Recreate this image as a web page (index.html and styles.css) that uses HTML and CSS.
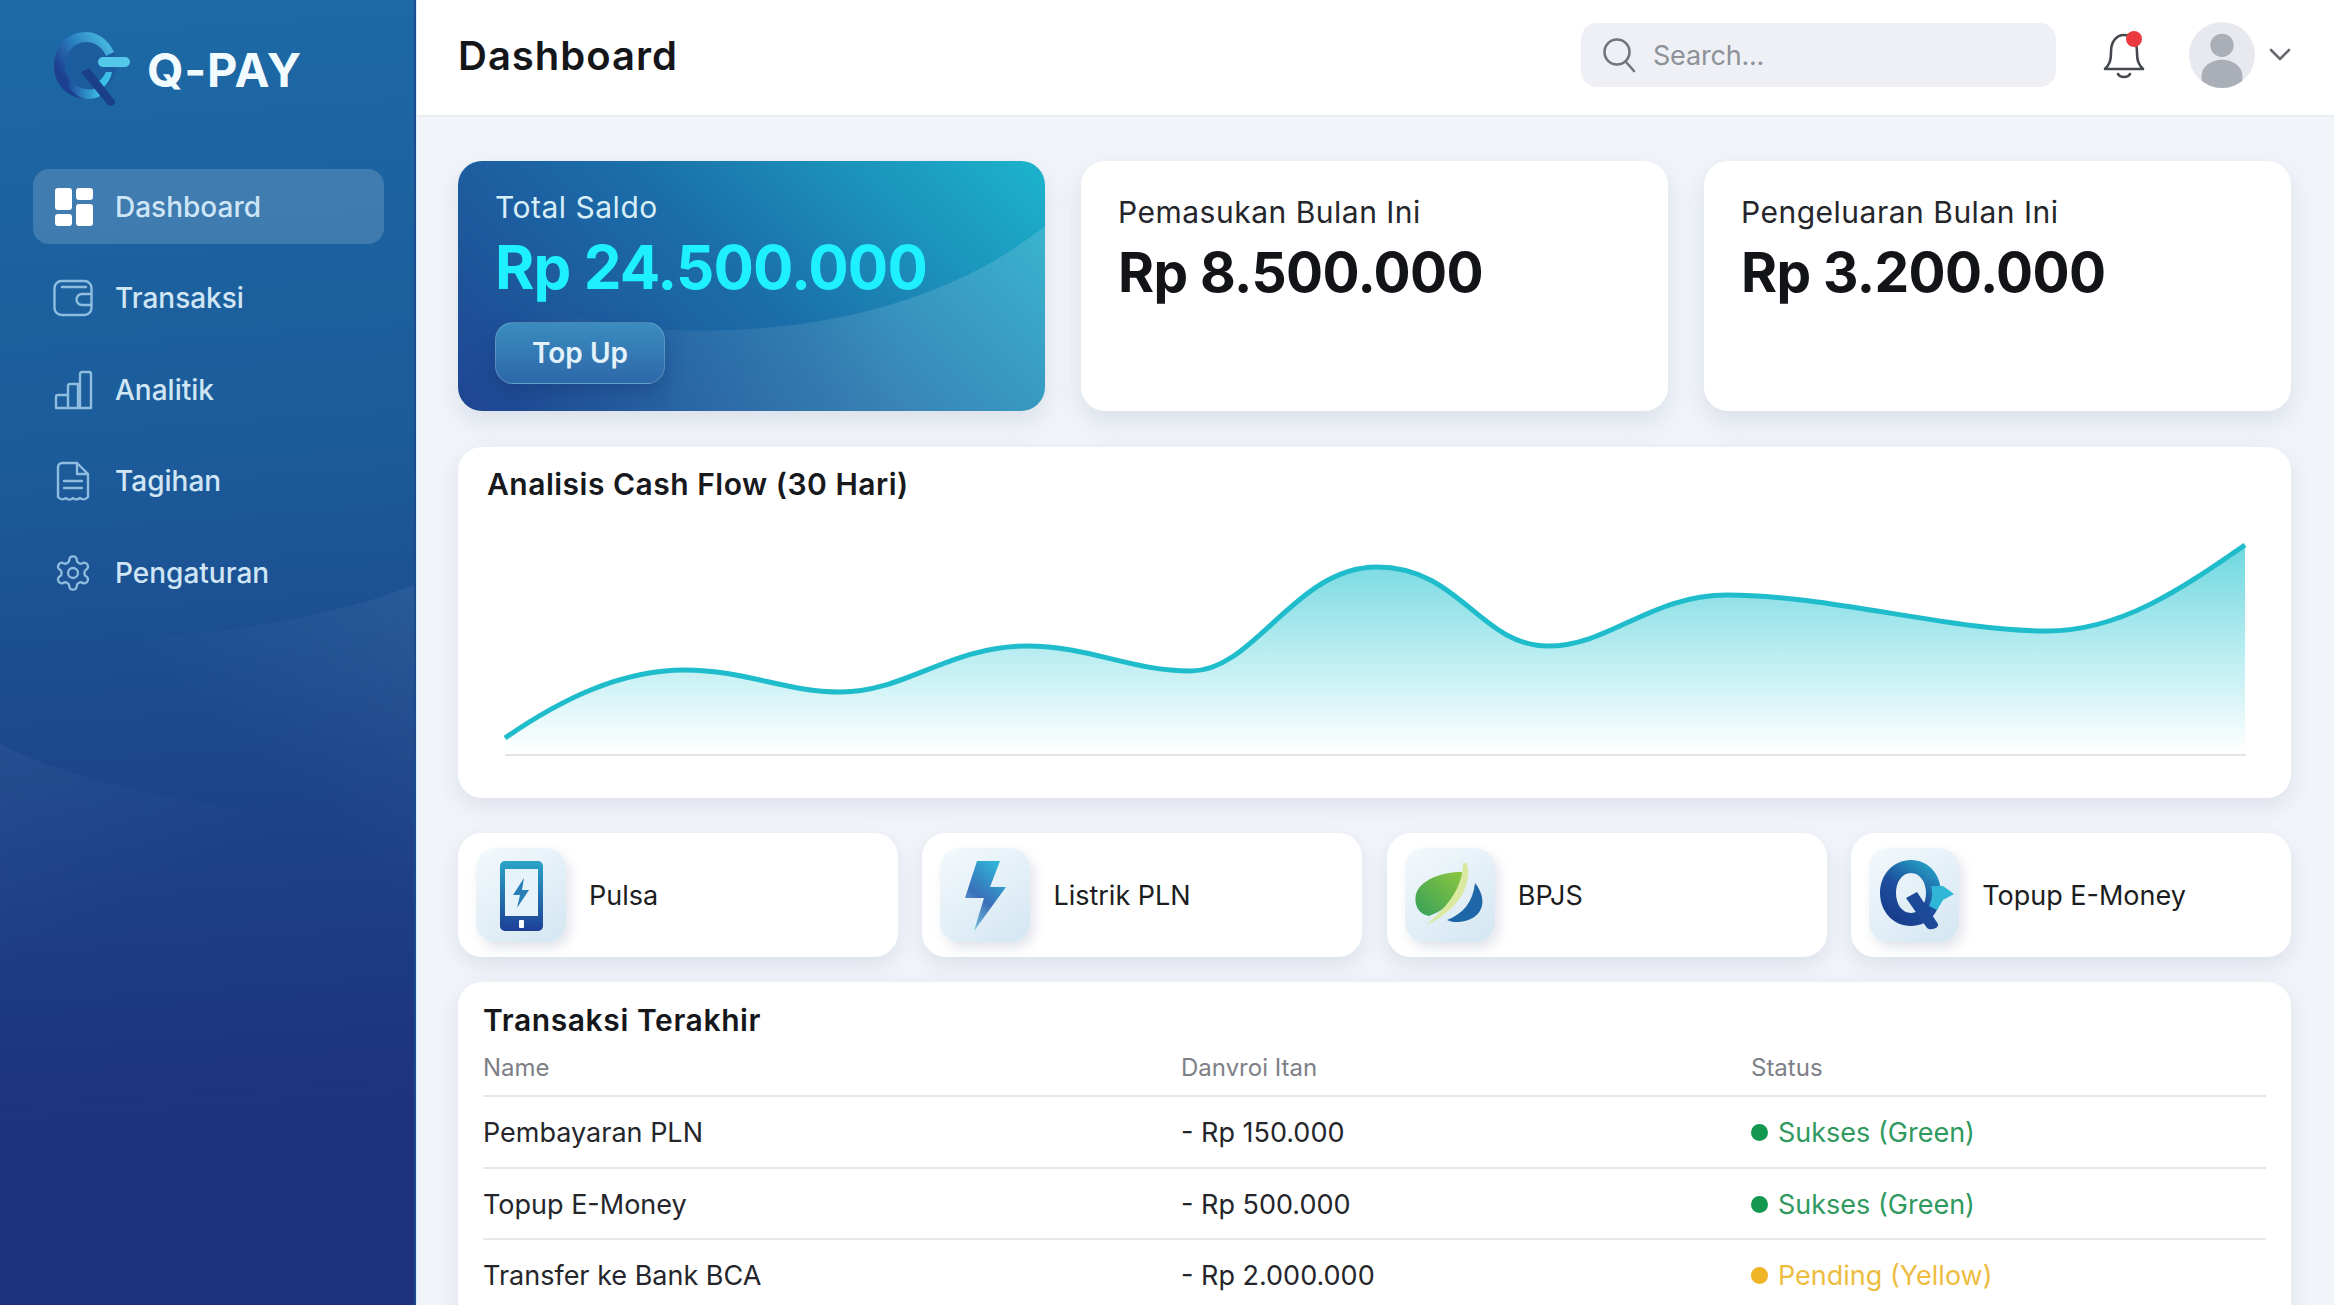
FILE: index.html
```html
<!DOCTYPE html>
<html lang="id">
<head>
<meta charset="utf-8">
<title>Q-PAY Dashboard</title>
<link rel="stylesheet" href="styles.css">
</head>
<body>
<div class="app">
  <aside class="sidebar">
    <svg class="waves" viewBox="0 0 416 1305" preserveAspectRatio="none" aria-hidden="true">
      <defs>
        <linearGradient id="waveA" gradientUnits="userSpaceOnUse" x1="416" y1="590" x2="250" y2="760"><stop offset="0" stop-color="#fff" stop-opacity=".055"/><stop offset="1" stop-color="#fff" stop-opacity="0"/></linearGradient>
        <linearGradient id="waveB" gradientUnits="userSpaceOnUse" x1="20" y1="750" x2="110" y2="920"><stop offset="0" stop-color="#fff" stop-opacity=".035"/><stop offset="1" stop-color="#fff" stop-opacity="0"/></linearGradient>
      </defs>
      <path d="M416 585C340 615 240 632 130 640C90 642 40 643 0 643V1000H416Z" fill="url(#waveA)"/>
      <path d="M0 744C70 780 170 800 270 812C320 818 370 822 416 824V1100H0Z" fill="url(#waveB)"/>
    </svg>
    <div class="brand">
      <svg class="brand-mark" viewBox="0 0 84 80" aria-hidden="true">
        <defs>
          <linearGradient id="qRing" x1="0.9" y1="0" x2="0.1" y2="0.6"><stop offset="0" stop-color="#4fc3e6"/><stop offset=".55" stop-color="#2a7fc0"/><stop offset="1" stop-color="#1d3f8f"/></linearGradient>
          <linearGradient id="qLow" x1="0" y1="0" x2="1" y2="0"><stop offset="0" stop-color="#1d4a9a"/><stop offset="1" stop-color="#3cc0e8"/></linearGradient>
        </defs>
        <circle cx="38" cy="37" r="29" fill="#1b4f97" opacity=".45"/>
        <path d="M64 24C58 11 47 4 36 4C17 4 4 19 4 38C4 56 17 70 36 71C42 71 46 70 50 68L47 60C43 61 40 62 36 61C24 60 15 50 15 38C15 25 24 14 36 14C45 14 52 19 56 28Z" fill="url(#qRing)"/>
        <path d="M18 58C24 66 30 71 38 71C43 71 47 70 50 68L47 60C40 63 30 62 18 52Z" fill="url(#qLow)"/>
        <path d="M56 44H62C61 50 58 55 54 59L49 53C52 51 54 48 56 44Z" fill="#3cc0e8"/>
        <path d="M31 44L39 40L65 73C66 76 60 80 57 76Z" fill="#1b3f8b"/>
        <rect x="48" y="29" width="32" height="10" rx="5" fill="#55c8ea"/>
      </svg>
      <span class="brand-name">Q-PAY</span>
    </div>
    <nav class="nav">
      <a class="nav-item is-active">
        <svg class="nav-icon" viewBox="0 0 40 40" aria-hidden="true"><g fill="#fff"><rect x="2" y="1" width="17" height="22" rx="3"/><rect x="23" y="1" width="17" height="12" rx="3"/><rect x="23" y="17" width="17" height="22" rx="3"/><rect x="2" y="27" width="17" height="12" rx="3"/></g></svg>
        <span>Dashboard</span>
      </a>
      <a class="nav-item">
        <svg class="nav-icon line" viewBox="0 0 40 40" aria-hidden="true"><rect x="1.5" y="3" width="37" height="34" rx="7"/><path d="M9 9H33M38 16H29a5 5 0 0 0 0 11H38"/></svg>
        <span>Transaksi</span>
      </a>
      <a class="nav-item">
        <svg class="nav-icon line" viewBox="0 0 40 40" aria-hidden="true"><path d="M3 38V27a2 2 0 0 1 2-2H15V38ZM15 38V16a2 2 0 0 1 2-2H25V38ZM27 38V4a2 2 0 0 1 2-2H36a2 2 0 0 1 2 2V38ZM3 38H38"/></svg>
        <span>Analitik</span>
      </a>
      <a class="nav-item">
        <svg class="nav-icon line" viewBox="0 0 40 40" aria-hidden="true"><path d="M5 36V6a4 4 0 0 1 4-4H24L35 13V36C32 39 30 39 27 37C24 39 22 39 20 37C18 39 15 39 13 37C10 39 8 39 5 36ZM24 2V13H35M11 20H29M11 27H29"/></svg>
        <span>Tagihan</span>
      </a>
      <a class="nav-item">
        <svg class="nav-icon line gear" viewBox="0 0 24 24" aria-hidden="true"><circle cx="12" cy="12" r="3"/><path d="M12.22 2h-.44a2 2 0 0 0-2 2v.18a2 2 0 0 1-1 1.73l-.43.25a2 2 0 0 1-2 0l-.15-.08a2 2 0 0 0-2.73.73l-.22.38a2 2 0 0 0 .73 2.73l.15.1a2 2 0 0 1 1 1.72v.51a2 2 0 0 1-1 1.74l-.15.09a2 2 0 0 0-.73 2.73l.22.38a2 2 0 0 0 2.73.73l.15-.08a2 2 0 0 1 2 0l.43.25a2 2 0 0 1 1 1.73V20a2 2 0 0 0 2 2h.44a2 2 0 0 0 2-2v-.18a2 2 0 0 1 1-1.73l.43-.25a2 2 0 0 1 2 0l.15.08a2 2 0 0 0 2.73-.73l.22-.39a2 2 0 0 0-.73-2.73l-.15-.08a2 2 0 0 1-1-1.74v-.5a2 2 0 0 1 1-1.74l.15-.09a2 2 0 0 0 .73-2.73l-.22-.38a2 2 0 0 0-2.73-.73l-.15.08a2 2 0 0 1-2 0l-.43-.25a2 2 0 0 1-1-1.73V4a2 2 0 0 0-2-2z"/></svg>
        <span>Pengaturan</span>
      </a>
    </nav>
  </aside>

  <div class="content">
    <header class="topbar">
      <h1 class="page-title">Dashboard</h1>
      <div class="topbar-right">
        <div class="search">
          <svg class="search-icon" viewBox="0 0 34 36" aria-hidden="true"><circle cx="15" cy="15" r="12.5"/><path d="M24 25L32 34"/></svg>
          <span class="search-text">Search...</span>
        </div>
        <div class="bell">
          <svg viewBox="0 0 42 50" aria-hidden="true"><path class="bell-line" d="M2 39C7 34 8 30 8 22C8 12 13 5 21 5C29 5 34 12 34 22C34 30 35 34 40 39ZM15 44C17 48 25 48 27 44"/><circle cx="31" cy="9" r="8" fill="#ea3a3f"/></svg>
        </div>
        <div class="avatar">
          <svg viewBox="0 0 66 68" aria-hidden="true"><circle cx="33" cy="24" r="12" fill="#aaaeb6"/><path d="M12 64V56C12 46 22 39 33 39C44 39 54 46 54 56V64C46 70 20 70 12 64Z" fill="#aaaeb6"/></svg>
        </div>
        <svg class="chevron" viewBox="0 0 22 14" aria-hidden="true"><path d="M2 2L11 11L20 2"/></svg>
      </div>
    </header>

    <main class="main">
      <section class="stats">
        <article class="stat stat-balance">
          <svg class="balance-wave" viewBox="0 0 587 250" preserveAspectRatio="none" aria-hidden="true">
            <defs><linearGradient id="balWave" x1="0" y1="0" x2="1" y2="0"><stop offset=".1" stop-color="#fff" stop-opacity="0"/><stop offset=".75" stop-color="#fff" stop-opacity=".13"/></linearGradient></defs>
            <path d="M587 65C500 135 370 175 214 169C170 167 120 160 80 140L0 250H587Z" fill="url(#balWave)"/>
          </svg>
          <div class="stat-inner">
            <p class="balance-label">Total Saldo</p>
            <p class="balance-value">Rp 24.500.000</p>
            <button class="topup">Top Up</button>
          </div>
        </article>
        <article class="stat">
          <p class="stat-label">Pemasukan Bulan Ini</p>
          <p class="stat-value">Rp 8.500.000</p>
        </article>
        <article class="stat">
          <p class="stat-label">Pengeluaran Bulan Ini</p>
          <p class="stat-value">Rp 3.200.000</p>
        </article>
      </section>

      <section class="card chart-card">
        <h2 class="chart-title">Analisis Cash Flow (30 Hari)</h2>
        <svg class="chart" viewBox="487 520 1774 250" aria-hidden="true">
          <defs>
            <linearGradient id="area" x1="0" y1="0" x2="0" y2="1"><stop offset="0" stop-color="#6ed7df"/><stop offset=".55" stop-color="#bdeef2"/><stop offset="1" stop-color="#fff"/></linearGradient>
          </defs>
          <path d="M505 738C560 700 620 670 685 670C745 670 785 692 841 692C905 692 950 646 1027 646C1090 646 1130 671 1191 671C1255 671 1295 567 1377 567C1460 567 1480 646 1548 646C1610 646 1650 595 1727 595C1830 595 1950 631 2047 631C2120 631 2180 590 2245 545V752H505Z" fill="url(#area)"/>
          <path d="M505 755H2246" stroke="#e2e4e8" stroke-width="2" fill="none"/>
          <path d="M505 738C560 700 620 670 685 670C745 670 785 692 841 692C905 692 950 646 1027 646C1090 646 1130 671 1191 671C1255 671 1295 567 1377 567C1460 567 1480 646 1548 646C1610 646 1650 595 1727 595C1830 595 1950 631 2047 631C2120 631 2180 590 2245 545" stroke="#1fbccb" stroke-width="5" fill="none"/>
        </svg>
      </section>

      <section class="shortcuts">
        <a class="shortcut">
          <span class="tile">
            <svg viewBox="0 0 90 94" aria-hidden="true">
              <defs><linearGradient id="phone" x1="0" y1="0" x2="0" y2="1"><stop offset="0" stop-color="#2aa4c8"/><stop offset="1" stop-color="#1d3f96"/></linearGradient></defs>
              <rect x="24" y="13" width="43" height="70" rx="5" fill="url(#phone)"/>
              <rect x="29" y="21" width="33" height="47" fill="#e6f3fa"/>
              <rect x="43" y="72" width="5" height="8" rx="1" fill="#fff"/>
              <path d="M48 30L37 47H44L41 60L53 42H46Z" fill="#2a7fb8"/>
            </svg>
          </span>
          <span class="shortcut-label">Pulsa</span>
        </a>
        <a class="shortcut">
          <span class="tile">
            <svg viewBox="0 0 90 94" aria-hidden="true">
              <defs><linearGradient id="bolt" x1="0.7" y1="0" x2="0.2" y2="1"><stop offset="0" stop-color="#2fb4d8"/><stop offset=".55" stop-color="#3a6fb8"/><stop offset="1" stop-color="#7cc6de"/></linearGradient></defs>
              <path d="M37 13H60L50 39H66L34 83L44 50H25Z" fill="url(#bolt)"/>
            </svg>
          </span>
          <span class="shortcut-label">Listrik PLN</span>
        </a>
        <a class="shortcut">
          <span class="tile">
            <svg viewBox="0 0 90 94" aria-hidden="true">
              <defs><linearGradient id="leaf" x1="1" y1="0" x2="0" y2="1"><stop offset="0" stop-color="#8cc63f"/><stop offset="1" stop-color="#35a05a"/></linearGradient></defs>
              <path d="M70 35C82 50 80 68 60 73C52 75 46 74 42 72C58 66 68 54 70 35Z" fill="#1d66a8"/>
              <path d="M57 24C60 40 50 58 24 68C12 66 9 55 11 46C15 32 36 24 57 24Z" fill="url(#leaf)"/>
              <path d="M62 15C68 40 50 64 21 77C44 58 58 38 58 15Z" fill="#dbe8a0"/>
            </svg>
          </span>
          <span class="shortcut-label">BPJS</span>
        </a>
        <a class="shortcut">
          <span class="tile">
            <svg viewBox="0 0 90 94" aria-hidden="true">
              <defs><linearGradient id="q2" x1="0.8" y1="0" x2="0.2" y2="1"><stop offset="0" stop-color="#26a6c8"/><stop offset=".5" stop-color="#1d4f9e"/><stop offset="1" stop-color="#173a8a"/></linearGradient></defs>
              <path fill-rule="evenodd" d="M42 12C60 12 72 27 72 45C72 63 60 78 42 78C24 78 11 63 11 45C11 27 24 12 42 12ZM42 25C33 25 27 34 27 45C27 56 33 65 42 65C51 65 57 56 57 45C57 34 51 25 42 25Z" fill="url(#q2)"/>
              <path d="M37 50L48 44L69 76C70 80 62 83 58 80Z" fill="#1d4a98"/>
              <path d="M62 38L74 38L85 46L74 52L68 62L60 58C63 52 64 45 62 38Z" fill="#2fb6d6"/>
            </svg>
          </span>
          <span class="shortcut-label">Topup E-Money</span>
        </a>
      </section>

      <section class="card tx-card">
        <h2 class="tx-title">Transaksi Terakhir</h2>
        <div class="tx-row tx-head">
          <span>Name</span><span>Danvroi Itan</span><span>Status</span>
        </div>
        <div class="tx-row">
          <span>Pembayaran PLN</span><span>- Rp 150.000</span><span class="status ok">Sukses (Green)</span>
        </div>
        <div class="tx-row">
          <span>Topup E-Money</span><span>- Rp 500.000</span><span class="status ok">Sukses (Green)</span>
        </div>
        <div class="tx-row">
          <span>Transfer ke Bank BCA</span><span>- Rp 2.000.000</span><span class="status wait">Pending (Yellow)</span>
        </div>
      </section>
    </main>
  </div>
</div>
</body>
</html>
```

FILE: styles.css
```css
* { box-sizing: border-box; }
html, body { margin: 0; height: 100%; overflow: hidden; }
body { font-family: Inter, "Liberation Sans", sans-serif; color: #17191d; background: #f1f4f9; }
p, h1, h2 { margin: 0; }

.app { display: grid; grid-template-columns: 416px 1fr; height: 100vh; }

/* Sidebar */
.sidebar {
  position: relative;
  padding: 27px 30px 0 33px;
  background: linear-gradient(176deg, #1c6aa6 0%, #1c5b9a 35%, #1c4389 62%, #1f327f 85%, #1f3280 100%);
  border-right: 2px solid #1b4a8d;
  box-shadow: 1px 0 0 #d8ebf7;
  overflow: hidden;
}
.waves { position: absolute; inset: 0; width: 100%; height: 100%; }
.brand { position: relative; display: flex; align-items: center; gap: 13px; height: 82px; padding-left: 17px; }
.brand-mark { width: 84px; height: 80px; flex: none; }
.brand-name { font-size: 47px; font-weight: 700; color: #f2fbff; letter-spacing: .8px; margin-top: 2px; }

.nav { position: relative; display: flex; flex-direction: column; margin-top: 60px; gap: 16.5px; }
.nav-item {
  display: flex; align-items: center; gap: 22px;
  height: 75px; padding-left: 20px; border-radius: 16px;
  font-size: 28px; color: #d0e6f5; font-weight: 500;
}
.nav-item.is-active { background: rgba(255,255,255,.16); color: #cfe6f6; }
.nav-icon { width: 40px; height: 40px; flex: none; }
.nav-icon.line { fill: none; stroke: #8fbde0; stroke-width: 2.4; stroke-linejoin: round; stroke-linecap: round; }
.nav-icon.gear { stroke-width: 1.4; }

/* Top bar */
.content { display: flex; flex-direction: column; min-width: 0; height: 100vh; overflow: hidden; }
.topbar {
  display: flex; align-items: center; justify-content: space-between;
  flex: none; height: 117px; padding: 0 43px 5px 42px;
  background: #fff; border-bottom: 2px solid #e9ecf1;
}
.page-title { font-size: 40px; font-weight: 600; letter-spacing: 1px; color: #14161a; }
.topbar-right { display: flex; align-items: center; }
.search {
  display: flex; align-items: center; gap: 17px;
  width: 475px; height: 64px; padding-left: 21px;
  background: #eef0f5; border-radius: 16px;
}
.search-icon { width: 34px; height: 36px; fill: none; stroke: #70747c; stroke-width: 2.6; stroke-linecap: round; }
.search-text { font-size: 27px; letter-spacing: -.2px; color: #8d9198; }
.bell { width: 42px; height: 50px; margin-left: 47px; }
.bell svg { display: block; width: 100%; height: 100%; }
.bell-line { fill: none; stroke: #45484e; stroke-width: 2.6; stroke-linejoin: round; stroke-linecap: round; }
.avatar { width: 66px; height: 66px; margin-left: 44px; border-radius: 50%; background: #e7e9ee; overflow: hidden; }
.avatar svg { display: block; width: 100%; height: 100%; }
.chevron { width: 22px; height: 14px; margin-left: 14px; fill: none; stroke: #666a71; stroke-width: 2.6; stroke-linecap: round; stroke-linejoin: round; }

/* Main column */
.main { display: flex; flex-direction: column; gap: 36px; padding: 44px 43px 0 42px; }
.stats { display: grid; grid-template-columns: repeat(3, 1fr); gap: 36px; flex: none; }
.stat {
  height: 250px; padding: 34px 37px; background: #fff; border-radius: 24px;
  box-shadow: 0 10px 24px rgba(70,90,130,.13);
}
.stat-label { font-size: 30px; line-height: 34px; letter-spacing: .5px; color: #24262b; }
.stat-value { font-size: 55px; line-height: 66px; font-weight: 700; margin-top: 10px; color: #121418; letter-spacing: -.6px; }

.stat-balance {
  position: relative; overflow: hidden; padding: 0;
  background: linear-gradient(45deg, #1f4592 0%, #1b6ea9 50%, #1cb4cd 100%);
}
.balance-wave { position: absolute; inset: 0; width: 100%; height: 100%; }
.stat-inner { position: relative; padding: 29px 37px; }
.balance-label { font-size: 30px; line-height: 34px; letter-spacing: .5px; color: #d8eff7; }
.balance-value { font-size: 60px; line-height: 74px; font-weight: 700; color: #1ef0ff; margin-top: 6px; letter-spacing: -.9px; }
.topup {
  display: block; width: 170px; height: 62px; margin-top: 18px;
  font: 600 28px Inter, "Liberation Sans", sans-serif; color: #e4f3fb;
  background: linear-gradient(180deg, #3a8cc0, #2d68a8);
  border: 1px solid rgba(255,255,255,.18); border-radius: 18px;
  box-shadow: 0 8px 18px rgba(20,50,110,.35);
}

.card { background: #fff; border-radius: 24px; box-shadow: 0 8px 22px rgba(70,90,130,.12); }
.chart-card { flex: none; height: 351px; padding: 20px 30px 28px 29px; }
.chart-title { font-size: 30px; line-height: 34px; font-weight: 600; letter-spacing: .5px; margin-bottom: 19px; color: #17191d; }
.chart { display: block; width: 100%; height: 250px; }

.shortcuts { display: grid; grid-template-columns: repeat(4, 1fr); gap: 24.5px; flex: none; margin-top: -1px; margin-bottom: -11px; }
.shortcut {
  display: flex; align-items: center; gap: 23px;
  height: 124px; padding-left: 18px; background: #fff; border-radius: 24px;
  box-shadow: 0 8px 20px rgba(70,90,130,.12);
}
.tile {
  display: block; flex: none; width: 90px; height: 94px; border-radius: 20px;
  background: linear-gradient(145deg, #f4f9fc 0%, #d3e6f2 100%);
  box-shadow: 4px 6px 12px rgba(70,90,130,.16);
}
.tile svg { display: block; width: 100%; height: 100%; }
.shortcut-label { font-size: 27px; color: #1b1d21; }

.tx-card { flex: none; height: 400px; padding: 18px 25px 0; }
.tx-title { font-size: 30px; line-height: 40px; font-weight: 600; letter-spacing: .6px; color: #15171b; }
.tx-row {
  display: grid; grid-template-columns: 698px 570px 1fr; align-items: center;
  height: 71.5px; padding-top: 2px; border-bottom: 2px solid #e6e8ec;
  font-size: 27px; color: #24262b;
}
.tx-row:last-child { border-bottom: 0; padding-top: 0; }
.tx-head { height: 57px; padding-top: 0; font-size: 24px; color: #7d8087; }
.status { display: flex; align-items: center; gap: 10px; }
.status::before { content: ""; width: 17px; height: 17px; border-radius: 50%; flex: none; }
.ok { color: #2f9960; }
.ok::before { background: #12994f; }
.wait { color: #edbd3f; }
.wait::before { background: #f0b428; }
```
